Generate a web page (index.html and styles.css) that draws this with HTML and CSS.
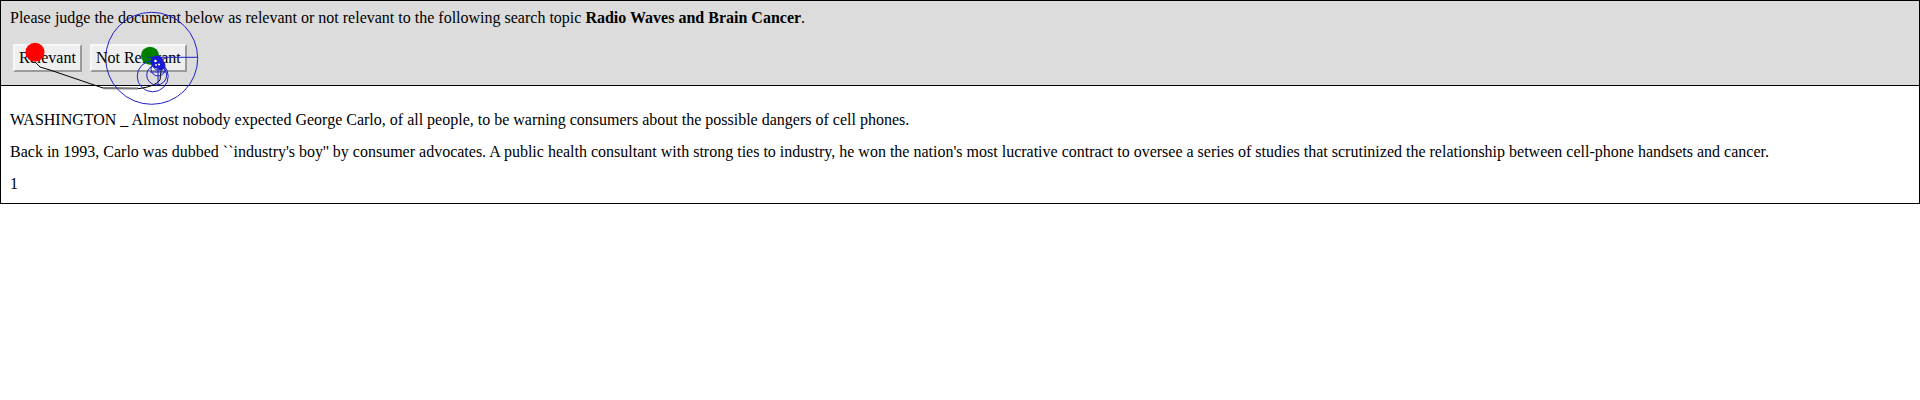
FILE: index.html
```html
<!DOCTYPE html>
<html>
<head>
<meta charset="utf-8">
<title>Relevance judgement</title>
<link rel="stylesheet" href="styles.css">
</head>
<body>
<div class="page">
  <div class="judge">
    <p class="prompt">Please judge the document below as relevant or not relevant to the following search topic <b>Radio Waves and Brain Cancer</b>.</p>
    <div class="actions">
      <button class="btn" type="button">Relevant</button>
      <button class="btn" type="button">Not Relevant</button>
    </div>
  </div>
  <div class="doc">
    <p>WASHINGTON _ Almost nobody expected George Carlo, of all people, to be warning consumers about the possible dangers of cell phones.</p>
    <p>Back in 1993, Carlo was dubbed ``industry's boy'' by consumer advocates. A public health consultant with strong ties to industry, he won the nation's most lucrative contract to oversee a series of studies that scrutinized the relationship between cell-phone handsets and cancer.</p>
    <p>1</p>
  </div>
  <svg class="trace" width="220" height="110" viewBox="0 0 220 110" xmlns="http://www.w3.org/2000/svg">
    <path d="M35 62 L40 67 L50 70 L103 88 L140 88.5 Q156 86 160 80 L161.5 66" fill="none" stroke="#000" stroke-width="1"/>
    <path d="M104 88.3 L138 88.6" fill="none" stroke="#777" stroke-width="2"/>
    <circle cx="35" cy="52.3" r="9.5" fill="#ff0000"/>
    <circle cx="150" cy="55.7" r="9" fill="#008000"/>
    <g fill="none" stroke="#2020c8" stroke-width="1">
      <circle cx="151.7" cy="58.3" r="46"/>
      <line x1="147" y1="57.3" x2="197.7" y2="57.3"/>
      <circle cx="152.7" cy="76.3" r="15.5"/>
      <circle cx="156.7" cy="75" r="10"/>
      <circle cx="158" cy="69" r="7"/>
      <circle cx="158" cy="65" r="5"/>
      <line x1="158" y1="60" x2="158" y2="85"/>
      <line x1="150" y1="72" x2="166" y2="72"/>
    </g>
    <circle cx="157" cy="62" r="6.5" fill="#1a1ad0"/>
    <circle cx="161" cy="65.5" r="4.5" fill="#1a1ad0"/>
    <circle cx="155.5" cy="61" r="1.3" fill="#ffffff"/>
    <circle cx="159" cy="64.5" r="1.1" fill="#ffffff"/>
    <circle cx="156" cy="65" r="0.9" fill="#ffffff"/>
  </svg>
</div>
</body>
</html>
```
FILE: styles.css
```css
html, body {
  margin: 0;
  padding: 0;
  background: #ffffff;
}

body {
  font-family: "Liberation Serif", "Times New Roman", serif;
  font-size: 16px;
  color: #000000;
}

.page {
  position: relative;
}

.judge {
  background: #dcdcdc;
  border: 1px solid #000000;
  padding: 8px 9px 13px 9px;
}

.prompt {
  margin: 0;
  line-height: 18px;
}

.actions {
  display: flex;
  gap: 8px;
  margin: 17px 0 0 3px;
}

.btn {
  font-family: "Liberation Serif", "Times New Roman", serif;
  font-size: 16px;
  line-height: 18px;
  color: #000000;
  background: #efefef;
  padding: 3px 4px;
  border-width: 2px;
  border-style: solid;
  border-color: #f7f7f7 #9a9a9a #9a9a9a #f7f7f7;
  border-radius: 0;
  margin: 0;
}

.doc {
  border: 1px solid #000000;
  border-top: 0;
  padding: 25px 9px 10px 9px;
}

.doc p {
  margin: 0;
  line-height: 18px;
}

.doc p + p {
  margin-top: 14px;
}

.trace {
  position: absolute;
  top: 0;
  left: 0;
  pointer-events: none;
  overflow: visible;
}
```
